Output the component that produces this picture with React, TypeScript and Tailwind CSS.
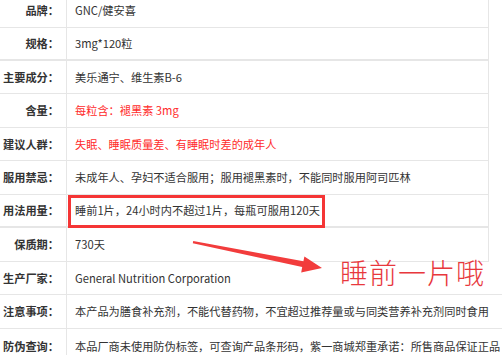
type Row = {
  label: string;
  value: string;
  size: string;
  red?: boolean;
  wide?: boolean;
  boxed?: boolean;
};

const rows: Row[] = [
  { label: "品牌：", value: "GNC/健安喜", size: "h-[34px] border-b" },
  { label: "规格：", value: "3mg*120粒", size: "h-[33px] border-b-2" },
  { label: "主要成分：", value: "美乐通宁、维生素B-6", size: "h-[33px] border-b" },
  { label: "含量：", value: "每粒含：褪黑素 3mg", size: "h-[34px] border-b", red: true },
  {
    label: "建议人群：",
    value: "失眠、睡眠质量差、有睡眠时差的成年人",
    size: "h-[33px] border-b",
    red: true,
  },
  {
    label: "服用禁忌：",
    value: "未成年人、孕妇不适合服用；服用褪黑素时，不能同时服用阿司匹林",
    size: "h-[34px] border-b",
  },
  {
    label: "用法用量：",
    value: "睡前1片，24小时内不超过1片，每瓶可服用120天",
    size: "h-[33px] border-b-2",
    boxed: true,
  },
  { label: "保质期：", value: "730天", size: "h-[34px] border-b" },
  {
    label: "生产厂家：",
    value: "General Nutrition Corporation",
    size: "h-[33px] border-b",
    wide: true,
  },
  {
    label: "注意事项：",
    value: "本产品为膳食补充剂，不能代替药物，不宜超过推荐量或与同类营养补充剂同时食用",
    size: "h-[34px] border-b",
    wide: true,
  },
  {
    label: "防伪查询：",
    value: "本品厂商未使用防伪标签，可查询产品条形码，紫一商城郑重承诺：所售商品保证正品",
    size: "h-[34px]",
    wide: true,
  },
];

const App = () => {
  return (
    <div className="relative w-[502px] h-[355px] overflow-hidden bg-white font-['Noto_Sans_CJK_SC',sans-serif] text-[11.2px] text-[#333]">
      <div className="mt-[-6px] flex flex-col">
        {rows.map((row) => (
          <div
            key={row.label}
            className={`relative flex shrink-0 border-[#e6e6e6] ${row.size} ${
              row.wide ? "w-full" : "w-[489px] border-r"
            }`}
          >
            <div className="w-[67px] shrink-0 flex items-center justify-end pr-[7px] border-r border-[#e6e6e6] font-bold whitespace-nowrap">
              {row.label}
            </div>
            <div
              className={`flex-1 flex items-center pl-[8px] whitespace-nowrap overflow-hidden ${
                row.red ? "text-[#ff2b2b]" : ""
              }`}
            >
              {row.value}
            </div>
            {row.boxed && (
              <div className="absolute left-[68px] top-0 w-[257px] h-[33px] border-[3px] border-[#f53535]" />
            )}
          </div>
        ))}
      </div>

      <svg
        className="absolute left-0 top-0"
        width="502"
        height="355"
        viewBox="0 0 502 355"
      >
        <polygon
          points="193.2,241 303.4,261.3 304.4,256.4 322,268 301.2,272.5 302.2,267.1 192.8,243.2"
          fill="#f23c3c"
        />
      </svg>

      <div className="absolute left-[340px] top-[254px] text-[28px] leading-[36px] font-light text-[#e8383d] tracking-[1px] whitespace-nowrap">
        睡前一片哦
      </div>
    </div>
  );
};

export default App;
